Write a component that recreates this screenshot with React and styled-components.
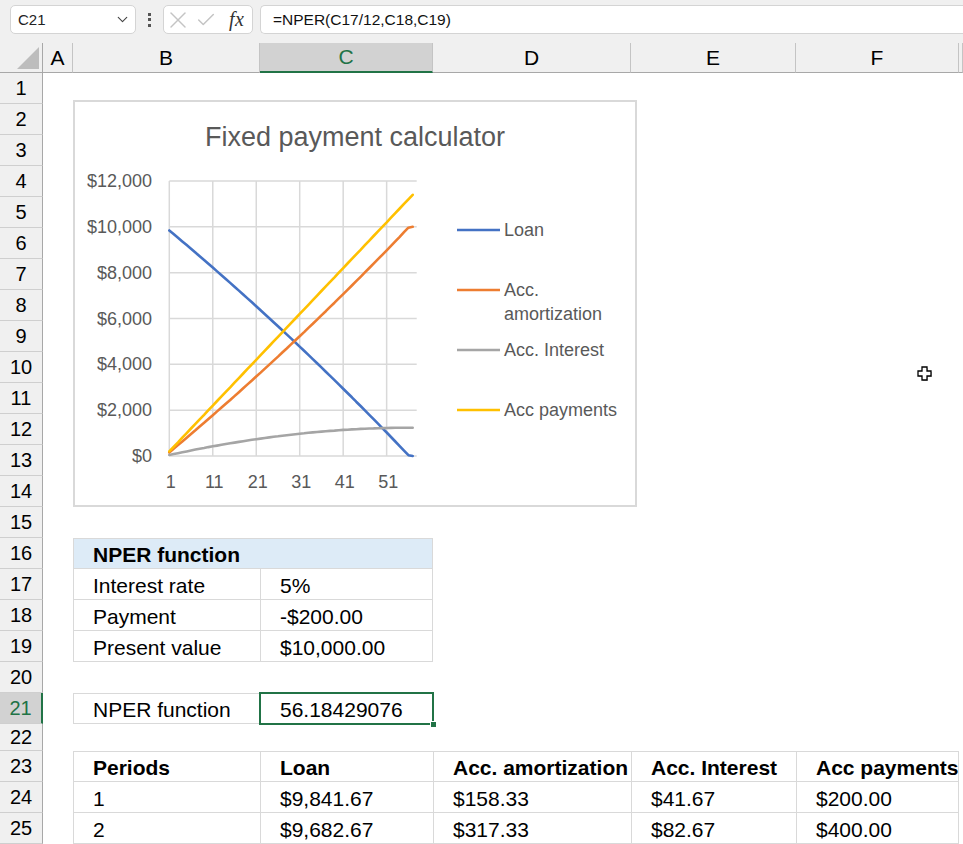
import React from "react";
import styled, { createGlobalStyle } from "styled-components";
import { ChevronDown, X, Check } from "lucide-react";

// excel-ish colours
const GREEN = "#217346";
const LINE = "#d9d9d9";
const CHROME = "#f0f0f0";
const COLS = "43px 30px 187px 173px 198px 165px 163px 1fr";

const GlobalStyle = createGlobalStyle`
  html, body { margin: 0; padding: 0; background: #fff; }
  body {
    font-family: "Liberation Sans", Arial, sans-serif;
    color: #000;
    overflow: hidden;
  }
`;

/* ---------- data ---------- */

const rate = 0.05 / 12;
const series = (() => {
  const loan = [], amort = [], interest = [], pay = [];
  let bal = 10000;
  let cumInt = 0;
  for (let k = 1; k <= 57; k++) {
    const i = bal * rate;
    cumInt += i;
    bal = Math.max(0, bal + i - 200);
    loan.push(bal);
    amort.push(10000 - bal);
    interest.push(cumInt);
    pay.push(200 * k);
  }
  return { loan, amort, interest, pay };
})();

const X0 = 169.3, DX = 4.347, Y0 = 456, KY = 275 / 12000;
const px = (k) => X0 + (k - 1) * DX;
const py = (v) => Y0 - v * KY;
const toPath = (arr) =>
  arr.map((v, i) => `${i ? "L" : "M"}${px(i + 1).toFixed(1)},${py(v).toFixed(1)}`).join(" ");

const lines = [
  { key: "loan", color: "#4472c4", label: ["Loan"], y: 230 },
  { key: "amort", color: "#ed7d31", label: ["Acc.", "amortization"], y: 290 },
  { key: "interest", color: "#a5a5a5", label: ["Acc. Interest"], y: 350 },
  { key: "pay", color: "#ffc000", label: ["Acc payments"], y: 410 },
];

const rowsWithCells = {
  16: [null, { text: "NPER function", bold: true, fill: "#ddebf7", span: 2, edges: "tlrb" }],
  17: [null, { text: "Interest rate", edges: "lb" }, { text: "5%", edges: "lrb" }],
  18: [null, { text: "Payment", edges: "lb" }, { text: "-$200.00", edges: "lrb" }],
  19: [null, { text: "Present value", edges: "lb" }, { text: "$10,000.00", edges: "lrb" }],
  21: [null, { text: "NPER function", edges: "tlb" }, { text: "56.18429076", selected: true }],
  23: [null, ...["Periods", "Loan", "Acc. amortization", "Acc. Interest", "Acc payments"].map((t, i) => ({
    text: t, bold: true, edges: i === 4 ? "tlrb" : "tlb",
  }))],
  24: [null, ...["1", "$9,841.67", "$158.33", "$41.67", "$200.00"].map((t, i) => ({
    text: t, edges: i === 4 ? "lrb" : "lb",
  }))],
  25: [null, ...["2", "$9,682.67", "$317.33", "$82.67", "$400.00"].map((t, i) => ({
    text: t, edges: i === 4 ? "lrb" : "lb",
  }))],
};

const rowNumbers = Array.from({ length: 25 }, (_, i) => i + 1);

/* ---------- styled parts ---------- */

const Window = styled.div`
  width: 963px;
  height: 844px;
  overflow: hidden;
  display: flex;
  flex-direction: column;
  background: #fff;
`;

const FormulaBar = styled.div`
  height: 43px;
  flex: none;
  box-sizing: border-box;
  padding: 5px 0 0 10px;
  background: ${CHROME};
  display: flex;
  align-items: flex-start;
`;

const NameBox = styled.div`
  width: 126px;
  height: 29px;
  box-sizing: border-box;
  background: #fff;
  border: 1px solid #d4d4d4;
  border-radius: 5px;
  display: flex;
  align-items: center;
  justify-content: space-between;
  padding: 0 4px 0 7px;
  font-size: 15px;
  color: #222;

  svg { color: #444; }
`;

const Dots = styled.div`
  width: 27px;
  height: 29px;
  display: flex;
  flex-direction: column;
  align-items: center;
  justify-content: center;
  gap: 2.5px;

  span {
    width: 3px;
    height: 3px;
    background: #555;
  }
`;

const FxBox = styled.div`
  width: 90px;
  height: 29px;
  box-sizing: border-box;
  background: #fff;
  border: 1px solid #d4d4d4;
  border-radius: 5px;
  display: flex;
  align-items: center;
  color: #c4c4c4;
`;

const IconSlot = styled.div`
  width: ${(p) => p.$w}px;
  display: flex;
  align-items: center;
  justify-content: center;
`;

const FxLabel = styled.span`
  font-family: "Liberation Serif", "Times New Roman", serif;
  font-style: italic;
  font-size: 20px;
  color: #333;
  margin-left: 9px;
  letter-spacing: 0.5px;
`;

const FormulaInput = styled.div`
  flex: 1;
  margin-left: 7px;
  height: 29px;
  box-sizing: border-box;
  background: #fff;
  border: 1px solid #d4d4d4;
  border-right: none;
  border-radius: 5px 0 0 5px;
  display: flex;
  align-items: center;
  padding-left: 12px;
  font-size: 15.5px;
  color: #111;
`;

const ColHeader = styled.div`
  height: 30px;
  flex: none;
  display: grid;
  grid-template-columns: ${COLS};
  background: ${CHROME};
`;

const ColHead = styled.div`
  box-sizing: border-box;
  display: flex;
  align-items: center;
  justify-content: center;
  font-size: 21px;
  color: ${(p) => (p.$active ? GREEN : "#000")};
  background: ${(p) => (p.$active ? "#d2d2d2" : CHROME)};
  border-right: 1px solid #c4c4c4;
  border-bottom: ${(p) => (p.$active ? `2px solid ${GREEN}` : "1px solid #a8a8a8")};
`;

const Corner = styled.div`
  box-sizing: border-box;
  display: flex;
  align-items: flex-end;
  justify-content: flex-end;
  padding: 0 3px 3px 0;
  border-right: 1px solid #a8a8a8;
  border-bottom: 1px solid #a8a8a8;

  span {
    width: 22px;
    height: 22px;
    background: #bdbdbd;
    clip-path: polygon(100% 0, 100% 100%, 0 100%);
  }
`;

const Sheet = styled.div`
  position: relative;
  flex: 1;
  overflow: hidden;
`;

const Row = styled.div`
  display: grid;
  grid-template-columns: ${COLS};
  height: ${(p) => p.$h}px;
`;

const RowHead = styled.div`
  box-sizing: border-box;
  display: flex;
  align-items: center;
  justify-content: center;
  font-size: 20px;
  background: ${(p) => (p.$active ? "#d2d2d2" : CHROME)};
  color: ${(p) => (p.$active ? GREEN : "#000")};
  border-bottom: 1px solid #cfcfcf;
  border-right: ${(p) => (p.$active ? `2px solid ${GREEN}` : "1px solid #a8a8a8")};
`;

const Cell = styled.div`
  box-sizing: border-box;
  position: relative;
  display: flex;
  align-items: center;
  padding: 3px 0 0 19px;
  white-space: nowrap;
  font-size: 21px;
  grid-column: span ${(p) => p.$span || 1};
  font-weight: ${(p) => (p.$bold ? 700 : 400)};
  background: ${(p) => p.$fill || "transparent"};
  ${(p) => p.$edges?.includes("t") && `border-top: 1px solid ${LINE};`}
  ${(p) => p.$edges?.includes("l") && `border-left: 1px solid ${LINE};`}
  ${(p) => p.$edges?.includes("r") && `border-right: 1px solid ${LINE};`}
  ${(p) => p.$edges?.includes("b") && `border-bottom: 1px solid ${LINE};`}
`;

const ActiveCell = styled(Cell)`
  padding-left: 20px;
  outline: 2px solid ${GREEN};
  outline-offset: -1px;
  z-index: 1;

  &::after {
    content: "";
    position: absolute;
    right: -4px;
    bottom: -4px;
    width: 5px;
    height: 5px;
    background: ${GREEN};
    border: 1px solid #fff;
  }
`;

const ChartFrame = styled.div`
  position: absolute;
  left: 73px;
  top: 27px;
  width: 564px;
  height: 407px;
  box-sizing: border-box;
  border: 2px solid ${LINE};
  background: #fff;
`;

const Plot = styled.svg`
  display: block;

  text {
    font-family: "Liberation Sans", Arial, sans-serif;
    fill: #595959;
    font-size: 18px;
  }
  .title { font-size: 27px; }
`;

const Pointer = styled.svg`
  position: absolute;
  left: 916px;
  top: 292px;
`;

/* ---------- components ---------- */

function Chart() {
  const yTicks = [0, 2000, 4000, 6000, 8000, 10000, 12000];
  const xTicks = [1, 11, 21, 31, 41, 51];
  return (
    <ChartFrame>
      <Plot width="560" height="403">
        <g transform="translate(-75,-102)">
          <text className="title" x="355" y="146" textAnchor="middle">Fixed payment calculator</text>

          {yTicks.map((v) => (
            <g key={v}>
              <line x1={X0} x2="416.7" y1={py(v)} y2={py(v)} stroke={LINE} strokeWidth="1.5" />
              <text x="152" y={py(v) + 6} textAnchor="end">${v.toLocaleString("en-US")}</text>
            </g>
          ))}
          {xTicks.map((k) => (
            <g key={k}>
              <line x1={px(k)} x2={px(k)} y1={py(12000)} y2={Y0} stroke={LINE} strokeWidth="1.5" />
              <text x={px(k) + 1.5} y="488" textAnchor="middle">{k}</text>
            </g>
          ))}

          {lines.map((l) => (
            <path key={l.key} d={toPath(series[l.key])} fill="none" stroke={l.color}
              strokeWidth="2.6" strokeLinejoin="round" strokeLinecap="round" />
          ))}

          {lines.map((l) => (
            <g key={l.key + "-legend"}>
              <line x1="457" x2="500" y1={l.y} y2={l.y} stroke={l.color} strokeWidth="2.6" />
              {l.label.map((t, i) => (
                <text key={t} x="504" y={l.y + 6 + i * 24}>{t}</text>
              ))}
            </g>
          ))}
        </g>
      </Plot>
    </ChartFrame>
  );
}

function SheetRow({ n }) {
  const defs = rowsWithCells[n] || [];
  const used = defs.reduce((s, d) => s + ((d && d.span) || 1), 0);
  const filler = Array.from({ length: 7 - used }, () => null);
  const all = [...defs, ...filler];
  return (
    <Row $h={n === 22 ? 27 : 31}>
      <RowHead $active={n === 21}>{n}</RowHead>
      {all.map((d, i) => {
        if (!d) return <Cell key={i} />;
        if (d.selected) return <ActiveCell key={i}>{d.text}</ActiveCell>;
        return (
          <Cell key={i} $span={d.span} $bold={d.bold} $fill={d.fill} $edges={d.edges}>
            {d.text}
          </Cell>
        );
      })}
    </Row>
  );
}

export default function App() {
  return (
    <>
      <GlobalStyle />
      <Window>
        <FormulaBar>
          <NameBox>
            C21
            <ChevronDown size={17} strokeWidth={1.6} />
          </NameBox>
          <Dots>
            <span />
            <span />
            <span />
          </Dots>
          <FxBox>
            <IconSlot $w={28}>
              <X size={30} strokeWidth={1.2} />
            </IconSlot>
            <IconSlot $w={28}>
              <Check size={22} strokeWidth={1.6} />
            </IconSlot>
            <FxLabel>fx</FxLabel>
          </FxBox>
          <FormulaInput>=NPER(C17/12,C18,C19)</FormulaInput>
        </FormulaBar>

        <ColHeader>
          <Corner>
            <span />
          </Corner>
          {["A", "B", "C", "D", "E", "F", ""].map((c, i) => (
            <ColHead key={i} $active={c === "C"}>{c}</ColHead>
          ))}
        </ColHeader>

        <Sheet>
          {rowNumbers.map((n) => (
            <SheetRow key={n} n={n} />
          ))}
          <Chart />
          <Pointer width="17" height="17" viewBox="0 0 17 17">
            <path d="M6 2h5v4h4v5h-4v4H6v-4H2V6h4z" fill="#888" opacity="0.5" transform="translate(1,1)" />
            <path d="M6 2h5v4h4v5h-4v4H6v-4H2V6h4z" fill="#fff" stroke="#000" strokeWidth="1.3" />
          </Pointer>
        </Sheet>
      </Window>
    </>
  );
}
